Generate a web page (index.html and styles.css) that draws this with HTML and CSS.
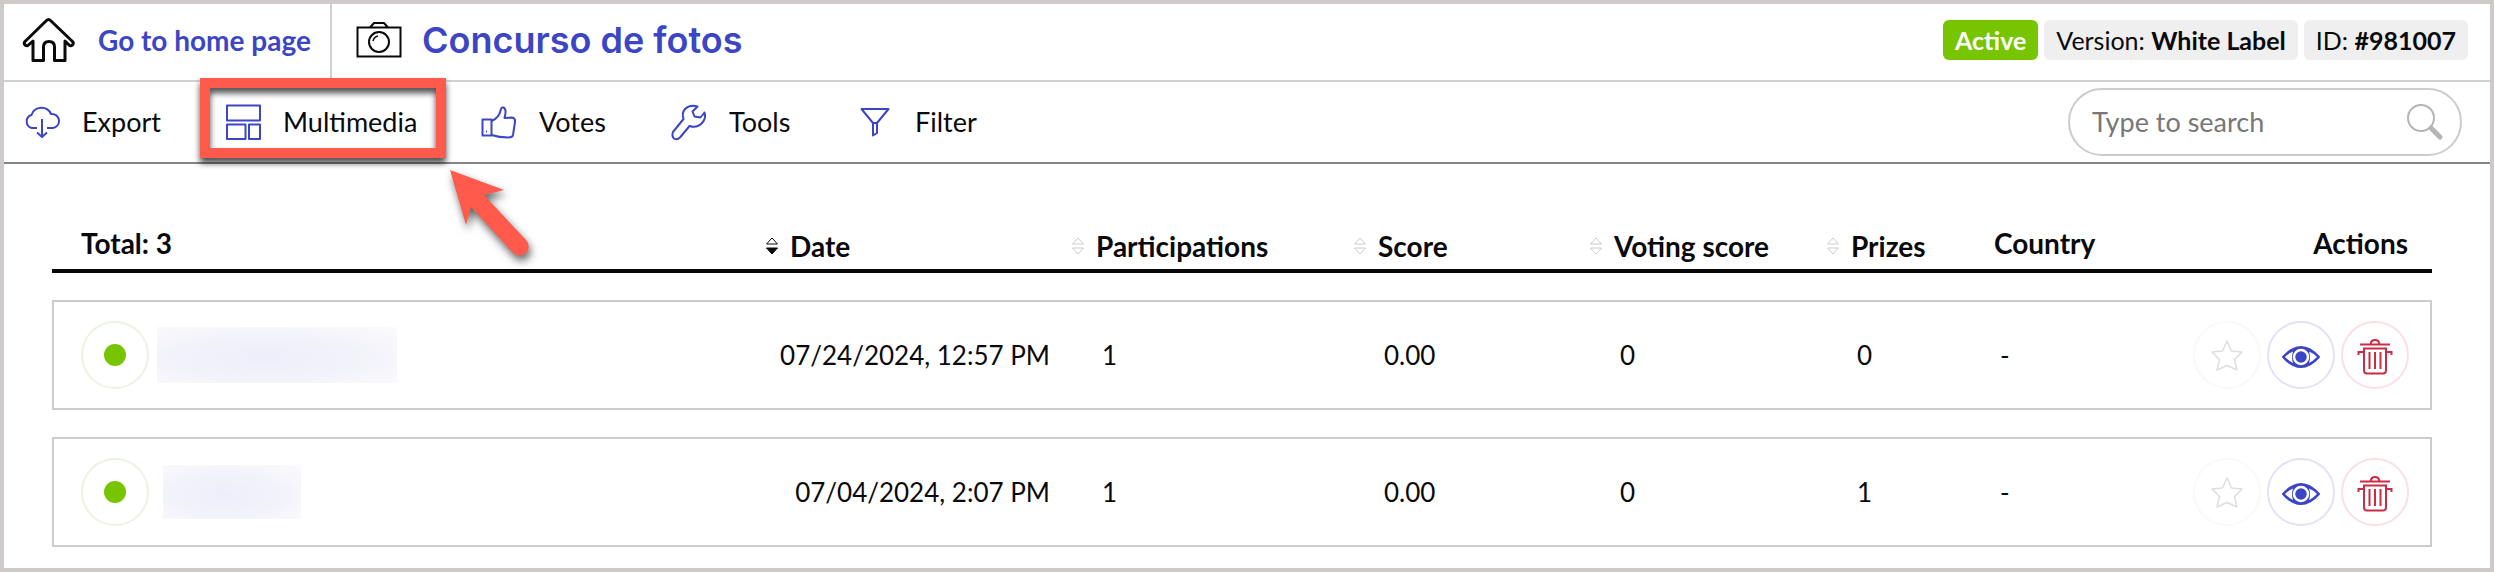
FILE: index.html
```
<!DOCTYPE html>
<html lang="en">
<head>
    <meta charset="UTF-8">
    <meta name="viewport" content="width=device-width, initial-scale=1.0">
    <title>Concurso de fotos</title>
    <link rel="stylesheet" href="styles.css">
</head>
<body>
    <header class="top-bar">
        <a href="#" class="home-link">
            <svg width="54" height="46" viewBox="0 0 54 46" fill="none" stroke="#0a0a0a" stroke-width="3" stroke-linejoin="round">
                <path d="M24.500 3.500 Q26.500 1.500 28.500 3.500 L50.500 24.500 Q52 26.500 50.500 28 Q48.500 29.500 47 28 L43 24 V43.500 H32.500 V30 Q32.500 24.500 27 24.500 Q21.500 24.500 21.500 30 V43.500 H11 V24 L6.500 28 Q5 29.500 3 28 Q1.500 26.500 3 24.500 Z"/>
            </svg>
            Go to home page
        </a>
        <div class="title">
            <svg width="46" height="38" viewBox="0 0 46 38" fill="none" stroke="#0a0a0a" stroke-width="2">
                <path d="M1.500 6.500 H44.500 V35.500 H1.500 Z M14 6.500 L18 2 H28 L32 6.500"/>
                <circle cx="23" cy="21" r="10"/>
                <path d="M17 20 Q18 16 22 15" stroke-width="1.500"/>
            </svg>
            <h1>Concurso de fotos</h1>
        </div>
        <div class="badges">
            <span class="badge badge-active">Active</span>
            <span class="badge">Version: <strong>White Label</strong></span>
            <span class="badge">ID: <strong>#981007</strong></span>
        </div>
    </header>

    <nav class="toolbar">
        <ul class="menu">
            <li><a href="#">
                <svg class="menu-icon" viewBox="0 0 40 40">
                    <path d="M15 26 H9.500 A6.800 6.800 0 0 1 9.500 13 A10.500 10.500 0 0 1 29 12 A7 7 0 0 1 31 26 H25"/>
                    <path d="M20 17 V35 M15 30.500 L20 35 L25 30.500"/>
                </svg>
                Export
            </a></li>
            <li><a href="#">
                <svg class="menu-icon" viewBox="0 0 40 40">
                    <path d="M4 3.500 H37 V18.500 H4 Z M4 22.500 H22.500 V37 H4 Z M26 22.500 H37 V37 H26 Z"/>
                </svg>
                Multimedia
            </a>
                <div class="highlight"></div>
                <svg class="arrow" width="90" height="100" viewBox="0 0 90 100">
                    <path d="M10 5 L64 25 L44 30 L86 75 A9 9 0 0 1 73 88 L31 42 L26 60 Z" fill="#ff5a4c"/>
                </svg>
            </li>
            <li><a href="#">
                <svg class="menu-icon" viewBox="0 0 40 40">
                    <path d="M3.500 17.500 H12.500 V33.500 H3.500 Z"/>
                    <path d="M12.500 19 C18 17 21 12 22 7 Q22.500 5 24.500 5.500 Q28 7 25.500 16 L33 15.500 Q36.500 16 36 20 L34 33 Q33.500 35.500 29 35.500 Q20 35.500 12.500 33"/>
                    <path d="M7 29.500 H8"/>
                </svg>
                Votes
            </a></li>
            <li><a href="#">
                <svg class="menu-icon" viewBox="0 0 40 40">
                    <path d="M28.500 4.500 Q21 2 16 7 Q12.500 11 14.500 17 L4 30 Q2.500 34 5 36.500 Q8 38.500 11 35.500 L20.500 24 Q28 26.500 33 21 Q37.500 16 35.500 10.500 L31.500 15.500 L25.500 14.500 L23.500 9.500 Z"/>
                </svg>
                Tools
            </a></li>
            <li><a href="#">
                <svg class="menu-icon" viewBox="0 0 40 40">
                    <path d="M6.500 7 H33.500 L22 21 V31 L18 33.500 V21 Z M18 21 H22"/>
                </svg>
                Filter
            </a></li>
        </ul>
        <form class="search">
            <input type="search" placeholder="Type to search" aria-label="Type to search">
            <svg width="38" height="38" viewBox="0 0 38 38" fill="none" stroke="#b5b5b5">
                <circle cx="15" cy="15" r="13" stroke-width="2"/>
                <path d="M25 25 L34 34" stroke-width="5" stroke-linecap="round"/>
            </svg>
        </form>
    </nav>

    <!-- shared icons -->
    <svg class="symbols" aria-hidden="true">
        <symbol id="sort" viewBox="0 0 12 18">
            <path d="M6 1 L11.500 7 H0.500 Z" fill="none" stroke="currentColor"/>
            <path d="M0.500 11 H11.500 L6 17 Z" stroke="currentColor"/>
        </symbol>
        <symbol id="star" viewBox="0 0 40 40">
            <path d="M20 6 L24.500 16 L35 17 L27.500 24.500 L30 35 L20 30.500 L10 35 L12.500 24.500 L5 17 L15.500 16 Z" fill="none" stroke="#dedede" stroke-width="1.500" stroke-linejoin="round"/>
        </symbol>
        <symbol id="eye" viewBox="0 0 40 40">
            <path d="M2 22 Q20 2 38 22 Q20 42 2 22 Z" fill="#3c46c4" stroke="#3c46c4" stroke-width="2" stroke-linejoin="round"/>
            <path d="M4 22 Q8 18 12 16.500 Q10 22 12 28 Q8 26 4 22 Z M36 22 Q32 18 28 16.500 Q30 22 28 28 Q32 26 36 22 Z" fill="#fff"/>
            <circle cx="20" cy="22" r="7" fill="#3c46c4" stroke="#fff" stroke-width="2.500"/>
        </symbol>
        <symbol id="trash" viewBox="0 0 40 40">
            <path d="M5 9.500 H35 M15.500 9.500 Q16 5 20 5 Q24 5 24.500 9.500 M9 13.500 H31 V35 Q31 38.500 28 38.500 H12 Q9 38.500 9 35 Z M9 17 H3.500 V20 M31 17 H36.500 V20 M14.500 17 V34 M20 17 V34 M25.500 17 V34" fill="none" stroke="#c92d45" stroke-width="2"/>
        </symbol>
    </svg>

    <main>
        <table class="entries">
            <colgroup>
                <col>
                <col class="col-date">
                <col class="col-participations">
                <col class="col-score">
                <col class="col-voting">
                <col class="col-prizes">
                <col class="col-country">
                <col class="col-actions">
            </colgroup>
            <thead>
                <tr>
                    <th class="name">Total: 3</th>
                    <th><button class="sort sorted"><svg><use href="#sort"/></svg>Date</button></th>
                    <th><button class="sort"><svg><use href="#sort"/></svg>Participations</button></th>
                    <th><button class="sort"><svg><use href="#sort"/></svg>Score</button></th>
                    <th><button class="sort"><svg><use href="#sort"/></svg>Voting score</button></th>
                    <th><button class="sort"><svg><use href="#sort"/></svg>Prizes</button></th>
                    <th>Country</th>
                    <th class="actions">Actions</th>
                </tr>
            </thead>
            <tbody>
                <tr>
                    <td class="name">
                        <div class="name-cell">
                            <span class="circle status"></span>
                            <span class="hidden-name"></span>
                        </div>
                    </td>
                    <td class="date">07/24/2024, 12:57 PM</td>
                    <td class="value">1</td>
                    <td class="value">0.00</td>
                    <td class="value">0</td>
                    <td class="value">0</td>
                    <td class="country">-</td>
                    <td class="actions">
                        <div class="action-buttons">
                            <button class="circle" aria-label="Favorite"><svg><use href="#star"/></svg></button>
                            <button class="circle view" aria-label="View"><svg><use href="#eye"/></svg></button>
                            <button class="circle delete" aria-label="Delete"><svg><use href="#trash"/></svg></button>
                        </div>
                    </td>
                </tr>
                <tr>
                    <td class="name">
                        <div class="name-cell">
                            <span class="circle status"></span>
                            <span class="hidden-name short"></span>
                        </div>
                    </td>
                    <td class="date">07/04/2024, 2:07 PM</td>
                    <td class="value">1</td>
                    <td class="value">0.00</td>
                    <td class="value">0</td>
                    <td class="value">1</td>
                    <td class="country">-</td>
                    <td class="actions">
                        <div class="action-buttons">
                            <button class="circle" aria-label="Favorite"><svg><use href="#star"/></svg></button>
                            <button class="circle view" aria-label="View"><svg><use href="#eye"/></svg></button>
                            <button class="circle delete" aria-label="Delete"><svg><use href="#trash"/></svg></button>
                        </div>
                    </td>
                </tr>
            </tbody>
        </table>
    </main>
</body>
</html>
```
FILE: styles.css
```
* { box-sizing: border-box; }
body {
    margin: 0;
    min-height: 100vh;
    border: 4px solid #cecaca;
    background-color: #fff;
    color: #0a0a0c;
    font-family: Lato, "Open Sans", sans-serif;
    font-size: 26px;
    line-height: 32px;
}
a { color: inherit; text-decoration: none; }
button, input { font: inherit; color: inherit; }
svg { flex: none; }

/* Top bar */
.top-bar { display: flex; height: 78px; border-bottom: 2px solid #d0d0d0; }
.home-link {
    display: flex;
    align-items: center;
    gap: 22px;
    width: 328px;
    padding: 0 0 4px 18px;
    border-right: 2px solid #d0d0d0;
    color: #3c46c4;
    font-size: 28px;
    font-weight: bold;
    white-space: nowrap;
}
.title { display: flex; align-items: center; gap: 20px; flex: 1; padding: 0 0 4px 24px; }
h1 {
    margin: 0;
    color: #3c46c4;
    font-family: Inter, sans-serif;
    font-size: 36px;
    font-weight: 600;
}
.badges { display: flex; align-items: flex-start; gap: 6px; padding: 16px 22px 0 0; }
.badge { padding: 0 12px; border-radius: 6px; background-color: #efefef; font-size: 25px; line-height: 40px; }
.badge-active { background-color: #77c400; color: #fff; font-weight: bold; }

/* Toolbar */
.toolbar {
    display: flex;
    justify-content: space-between;
    align-items: center;
    height: 82px;
    padding: 0 28px 0 18px;
    border-bottom: 2px solid #858585;
    font-size: 27px;
}
.menu {
    display: grid;
    grid-template-columns: 201px 256px 190px 186px auto;
    margin: 0;
    padding: 0;
    list-style: none;
}
.menu li { position: relative; }
.menu a { display: flex; align-items: center; gap: 20px; }
.menu-icon { width: 40px; height: 40px; fill: none; stroke: #3c46c4; stroke-width: 2; stroke-linejoin: round; }
.highlight {
    position: absolute;
    top: -24px;
    left: -23px;
    width: 246px;
    height: 80px;
    border: 10px solid #ff5a4c;
    filter: drop-shadow(0 5px 3px rgba(0, 0, 0, 0.7));
}
.arrow {
    position: absolute;
    top: 63px;
    left: 217px;
    overflow: visible;
    filter: drop-shadow(2px 5px 4px rgba(0, 0, 0, 0.6));
}
.search {
    display: flex;
    align-items: center;
    width: 394px;
    height: 68px;
    padding: 0 16px 0 22px;
    border: 2px solid #ccc;
    border-radius: 34px;
}
.search input { flex: 1; min-width: 0; padding: 0; border: 0; outline: 0; background: none; }
.search input::placeholder { color: #777; }

/* Entries */
.symbols { display: none; }
main { padding: 36px 58px 0 48px; }
.entries { width: 100%; margin-bottom: -10px; table-layout: fixed; border-collapse: separate; border-spacing: 0 27px; }
.col-date { width: 306px; }
.col-participations { width: 282px; }
.col-score { width: 236px; }
.col-voting { width: 237px; }
.col-prizes { width: 167px; }
.col-country { width: 140px; }
.col-actions { width: 298px; }
th {
    height: 46px;
    padding: 0;
    border-bottom: 4px solid #060608;
    font-size: 28px;
    text-align: left;
    vertical-align: top;
}
.sort {
    display: flex;
    align-items: center;
    gap: 12px;
    margin-top: 3px;
    padding: 0;
    border: 0;
    background: none;
    font-weight: bold;
}
.sort svg { width: 12px; height: 18px; color: #ccc; fill: none; }
.sorted svg { color: #0a0a0c; fill: #0a0a0c; }
td { height: 110px; padding: 0; border: 2px solid #ccc; border-width: 2px 0; }
td.name { border-left-width: 2px; }
td.actions { border-right-width: 2px; }
th.name { padding-left: 29px; }
td.name { padding-left: 27px; }
.date { padding-right: 22px; text-align: right; }
.value { padding-left: 30px; }
.country { padding-left: 6px; }
th.actions { padding-right: 24px; text-align: right; }
td.actions { padding-right: 21px; }
.name-cell { display: flex; align-items: center; gap: 8px; }
.circle {
    display: flex;
    justify-content: center;
    align-items: center;
    width: 68px;
    height: 68px;
    padding: 0;
    border: 2px solid #f9f9f9;
    border-radius: 50%;
    background: none;
}
.circle svg { width: 40px; height: 40px; }
.status { border-color: #ecf3e4; }
.status::before { content: ""; width: 22px; height: 22px; border-radius: 50%; background-color: #77c400; }
.view { border-color: #e2e2f6; }
.delete { border-color: #fbdfe3; }
.hidden-name {
    width: 240px;
    height: 56px;
    background: radial-gradient(farthest-corner at 45% 55%, #eeeefa, #f2f2fa 50%, #fbfbfd);
}
.hidden-name.short { width: 138px; height: 54px; margin-left: 6px; }
.action-buttons { display: flex; justify-content: flex-end; gap: 6px; }
```
